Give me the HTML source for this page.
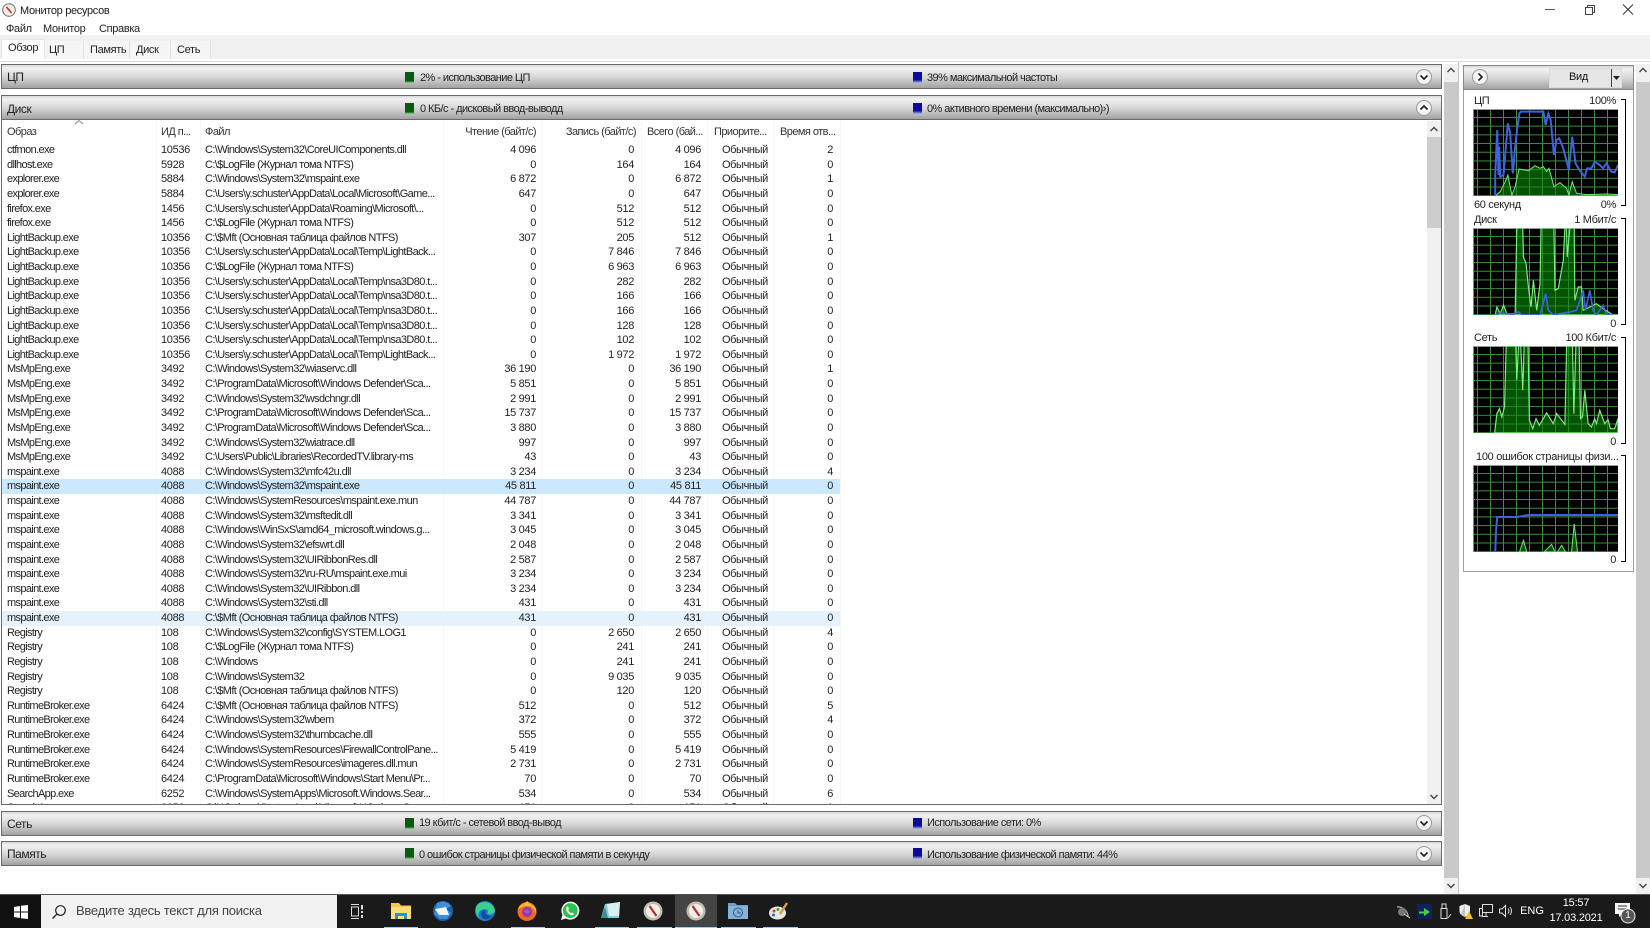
<!DOCTYPE html>
<html lang="ru"><head><meta charset="utf-8"><title>Монитор ресурсов</title>
<style>
*{box-sizing:border-box}
html,body{margin:0;padding:0;background:#fff;width:1650px;height:928px;overflow:hidden}
body{position:relative;font:11px/14px "Liberation Sans","Noto Sans CJK SC",sans-serif;color:#222;letter-spacing:-.33px}
.t{position:absolute;white-space:nowrap;line-height:14px}
.st{letter-spacing:-.56px}
.a{position:absolute}
.pn{position:absolute;left:1px;width:1441px;height:25px;border:1px solid #6a6a6a;background:linear-gradient(#d8d8d8,#f1f1f1 14%,#d4d4d4 55%,#a2a2a2)}
.cap{position:absolute;left:5px;font-size:12px;letter-spacing:-.45px;white-space:nowrap;color:#222;line-height:14px}
.g,.b{position:absolute;width:9px;height:11px}
.g{left:405px;background:linear-gradient(#0a5a12 0,#0a5a12 80%,#7ee27e 100%)}
.b{left:913px;background:linear-gradient(#0a0a9c 0,#0a0a9c 70%,#9cc4f0 100%)}
.circ{position:absolute;width:16px;height:16px;border-radius:50%;border:1px solid #9a9a9a;background:radial-gradient(#fff,#e8e8e8)}
#tbl{position:absolute;left:2px;top:143px;width:1425px;height:661px;overflow:hidden}
.r{position:relative;height:14.63px;margin:0;white-space:nowrap;width:838px}
.r span{position:absolute;top:0;line-height:14.6px}
.r span:nth-child(1){left:5px;letter-spacing:-.65px}
.r span:nth-child(2){left:159px}
.r span:nth-child(3){left:203px;letter-spacing:-.6px}
.r span:nth-child(4){left:444px;width:90px;text-align:right}
.r span:nth-child(5){left:539px;width:93px;text-align:right}
.r span:nth-child(6){left:639px;width:60px;text-align:right}
.r span:nth-child(7){left:720px;letter-spacing:-.4px}
.r span:nth-child(8){left:771px;width:60px;text-align:right}
.s1{background:#cce8ff}.s2{background:#e5f2fb}
.h{color:#333;top:125px;letter-spacing:-.55px}
.sep{position:absolute;top:121px;height:683px;width:1px;background:#f6f6f6}
.ch{position:absolute;width:145px;height:87px;background-color:#000;border-top:1px solid #9a9a9a;border-left:1px solid #8a8a8a;
background-image:linear-gradient(#3f8f3f 1px,transparent 1px),linear-gradient(90deg,#3f8f3f 1px,transparent 1px);background-size:13px 8.7px;background-position:3px 7px}
.ch svg{position:absolute;left:-1px;top:-1px;width:145px;height:87px;overflow:hidden}
.br{position:absolute;left:1621px;width:5px;border:1px solid #000;border-left:0}
.ul{position:absolute;top:926.5px;height:1.5px;background:#9ccbee}
.w{color:#fff;letter-spacing:0}
</style></head><body>

<svg class="a" style="left:2px;top:3px" width="14" height="14" viewBox="0 0 14 14"><circle cx="7" cy="7" r="6.3" fill="#f2eee8" stroke="#7a6a60"/><path d="M4.500 4L9.500 10" stroke="#b83030" stroke-width="1.600"/></svg>
<div class="t" style="left:20px;top:4px;color:#1a1a1a">Монитор ресурсов</div>
<div class="t" style="left:6px;top:22px">Файл</div>
<div class="t" style="left:43px;top:22px">Монитор</div>
<div class="t" style="left:99px;top:22px">Справка</div>

<svg class="a" style="left:1540px;top:2px" width="100" height="16" viewBox="0 0 100 16"><path d="M5 7.500H15" stroke="#555" stroke-width="1"/><path d="M45.500 5.500h7v7h-7zM47.500 5.500v-2h7v7h-2" fill="none" stroke="#444"/><path d="M83 2.500L93 12.500M93 2.500L83 12.500" stroke="#333" stroke-width="1"/></svg>

<div class="a" style="left:0;top:35px;width:1650px;height:24px;background:#f0f0f0"></div>
<div class="a" style="left:0;top:61px;width:1650px;height:1px;background:#dcdcdc"></div>
<div class="a" style="left:1px;top:39px;width:44px;height:20px;background:#fdfdfd;border:1px solid #e6e6e6;border-bottom:0"></div>
<div class="a" style="left:45px;top:41px;width:39px;height:18px;background:#f5f5f5;border-right:1px solid #e2e2e2"></div>
<div class="a" style="left:84px;top:41px;width:46px;height:18px;background:#f5f5f5;border-right:1px solid #e2e2e2"></div>
<div class="a" style="left:130px;top:41px;width:41px;height:18px;background:#f5f5f5;border-right:1px solid #e2e2e2"></div>
<div class="a" style="left:171px;top:41px;width:40px;height:18px;background:#f5f5f5;border-right:1px solid #e2e2e2"></div>
<div class="t" style="left:8px;top:41px">Обзор</div>
<div class="t" style="left:49px;top:43px">ЦП</div>
<div class="t" style="left:90px;top:43px">Память</div>
<div class="t" style="left:136px;top:43px">Диск</div>
<div class="t" style="left:177px;top:43px">Сеть</div>

<!-- Panels -->
<div class="pn" style="top:64px"><div class="cap" style="top:5px">ЦП</div></div>
<div class="g" style="top:72px"></div><div class="t st" style="left:420px;top:71px">2% - использование ЦП</div>
<div class="b" style="top:72px"></div><div class="t st" style="left:927px;top:71px">39% максимальной частоты</div>

<div class="pn" style="top:95px"><div class="cap" style="top:6px">Диск</div></div>
<div class="g" style="top:103px"></div><div class="t st" style="left:420px;top:102px">0 КБ/с - дисковый ввод-выводд</div>
<div class="b" style="top:103px"></div><div class="t st" style="left:927px;top:102px">0% активного времени (максимально)›)</div>

<div class="circ" style="left:1416px;top:69px"></div>
<svg class="a" style="left:1418px;top:71px" width="12" height="12"><path d="M2.500 4.500L6 8L9.500 4.500" fill="none" stroke="#222" stroke-width="1.700"/></svg>
<div class="circ" style="left:1416px;top:100px"></div>
<svg class="a" style="left:1418px;top:102px" width="12" height="12"><path d="M2.500 7.500L6 4L9.500 7.500" fill="none" stroke="#222" stroke-width="1.700"/></svg>

<div class="a" style="left:1px;top:120px;width:1px;height:684px;background:#6a6a6a"></div>
<div class="a" style="left:1441px;top:120px;width:1px;height:685px;background:#6a6a6a"></div>
<div class="a" style="left:1px;top:804px;width:1441px;height:1px;background:#6a6a6a"></div>

<div class="sep" style="left:156px"></div><div class="sep" style="left:200px"></div><div class="sep" style="left:443px"></div><div class="sep" style="left:541px"></div><div class="sep" style="left:641px"></div><div class="sep" style="left:707px"></div><div class="sep" style="left:773px"></div><div class="sep" style="left:840px"></div>

<svg class="a" style="left:74px;top:119px" width="10" height="6"><path d="M1 5L5 1.500L9 5" fill="none" stroke="#888"/></svg>
<div class="t h" style="left:7px">Образ</div>
<div class="t h" style="left:161px">ИД п...</div>
<div class="t h" style="left:205px">Файл</div>
<div class="t h" style="left:446px;width:90px;text-align:right">Чтение (байт/с)</div>
<div class="t h" style="left:536px;width:100px;text-align:right">Запись (байт/с)</div>
<div class="t h" style="left:647px">Всего (бай...</div>
<div class="t h" style="left:714px">Приорите...</div>
<div class="t h" style="left:780px">Время отв...</div>

<div id="tbl">
<p class="r"><span>ctfmon.exe</span><span>10536</span><span>C:\Windows\System32\CoreUIComponents.dll</span><span>4 096</span><span>0</span><span>4 096</span><span>Обычный</span><span>2</span></p>
<p class="r"><span>dllhost.exe</span><span>5928</span><span>C:\$LogFile (Журнал тома NTFS)</span><span>0</span><span>164</span><span>164</span><span>Обычный</span><span>0</span></p>
<p class="r"><span>explorer.exe</span><span>5884</span><span>C:\Windows\System32\mspaint.exe</span><span>6 872</span><span>0</span><span>6 872</span><span>Обычный</span><span>1</span></p>
<p class="r"><span>explorer.exe</span><span>5884</span><span>C:\Users\y.schuster\AppData\Local\Microsoft\Game...</span><span>647</span><span>0</span><span>647</span><span>Обычный</span><span>0</span></p>
<p class="r"><span>firefox.exe</span><span>1456</span><span>C:\Users\y.schuster\AppData\Roaming\Microsoft\...</span><span>0</span><span>512</span><span>512</span><span>Обычный</span><span>0</span></p>
<p class="r"><span>firefox.exe</span><span>1456</span><span>C:\$LogFile (Журнал тома NTFS)</span><span>0</span><span>512</span><span>512</span><span>Обычный</span><span>0</span></p>
<p class="r"><span>LightBackup.exe</span><span>10356</span><span>C:\$Mft (Основная таблица файлов NTFS)</span><span>307</span><span>205</span><span>512</span><span>Обычный</span><span>1</span></p>
<p class="r"><span>LightBackup.exe</span><span>10356</span><span>C:\Users\y.schuster\AppData\Local\Temp\LightBack...</span><span>0</span><span>7 846</span><span>7 846</span><span>Обычный</span><span>0</span></p>
<p class="r"><span>LightBackup.exe</span><span>10356</span><span>C:\$LogFile (Журнал тома NTFS)</span><span>0</span><span>6 963</span><span>6 963</span><span>Обычный</span><span>0</span></p>
<p class="r"><span>LightBackup.exe</span><span>10356</span><span>C:\Users\y.schuster\AppData\Local\Temp\nsa3D80.t...</span><span>0</span><span>282</span><span>282</span><span>Обычный</span><span>0</span></p>
<p class="r"><span>LightBackup.exe</span><span>10356</span><span>C:\Users\y.schuster\AppData\Local\Temp\nsa3D80.t...</span><span>0</span><span>166</span><span>166</span><span>Обычный</span><span>0</span></p>
<p class="r"><span>LightBackup.exe</span><span>10356</span><span>C:\Users\y.schuster\AppData\Local\Temp\nsa3D80.t...</span><span>0</span><span>166</span><span>166</span><span>Обычный</span><span>0</span></p>
<p class="r"><span>LightBackup.exe</span><span>10356</span><span>C:\Users\y.schuster\AppData\Local\Temp\nsa3D80.t...</span><span>0</span><span>128</span><span>128</span><span>Обычный</span><span>0</span></p>
<p class="r"><span>LightBackup.exe</span><span>10356</span><span>C:\Users\y.schuster\AppData\Local\Temp\nsa3D80.t...</span><span>0</span><span>102</span><span>102</span><span>Обычный</span><span>0</span></p>
<p class="r"><span>LightBackup.exe</span><span>10356</span><span>C:\Users\y.schuster\AppData\Local\Temp\LightBack...</span><span>0</span><span>1 972</span><span>1 972</span><span>Обычный</span><span>0</span></p>
<p class="r"><span>MsMpEng.exe</span><span>3492</span><span>C:\Windows\System32\wiaservc.dll</span><span>36 190</span><span>0</span><span>36 190</span><span>Обычный</span><span>1</span></p>
<p class="r"><span>MsMpEng.exe</span><span>3492</span><span>C:\ProgramData\Microsoft\Windows Defender\Sca...</span><span>5 851</span><span>0</span><span>5 851</span><span>Обычный</span><span>0</span></p>
<p class="r"><span>MsMpEng.exe</span><span>3492</span><span>C:\Windows\System32\wsdchngr.dll</span><span>2 991</span><span>0</span><span>2 991</span><span>Обычный</span><span>0</span></p>
<p class="r"><span>MsMpEng.exe</span><span>3492</span><span>C:\ProgramData\Microsoft\Windows Defender\Sca...</span><span>15 737</span><span>0</span><span>15 737</span><span>Обычный</span><span>0</span></p>
<p class="r"><span>MsMpEng.exe</span><span>3492</span><span>C:\ProgramData\Microsoft\Windows Defender\Sca...</span><span>3 880</span><span>0</span><span>3 880</span><span>Обычный</span><span>0</span></p>
<p class="r"><span>MsMpEng.exe</span><span>3492</span><span>C:\Windows\System32\wiatrace.dll</span><span>997</span><span>0</span><span>997</span><span>Обычный</span><span>0</span></p>
<p class="r"><span>MsMpEng.exe</span><span>3492</span><span>C:\Users\Public\Libraries\RecordedTV.library-ms</span><span>43</span><span>0</span><span>43</span><span>Обычный</span><span>0</span></p>
<p class="r"><span>mspaint.exe</span><span>4088</span><span>C:\Windows\System32\mfc42u.dll</span><span>3 234</span><span>0</span><span>3 234</span><span>Обычный</span><span>4</span></p>
<p class="r s1"><span>mspaint.exe</span><span>4088</span><span>C:\Windows\System32\mspaint.exe</span><span>45 811</span><span>0</span><span>45 811</span><span>Обычный</span><span>0</span></p>
<p class="r"><span>mspaint.exe</span><span>4088</span><span>C:\Windows\SystemResources\mspaint.exe.mun</span><span>44 787</span><span>0</span><span>44 787</span><span>Обычный</span><span>0</span></p>
<p class="r"><span>mspaint.exe</span><span>4088</span><span>C:\Windows\System32\msftedit.dll</span><span>3 341</span><span>0</span><span>3 341</span><span>Обычный</span><span>0</span></p>
<p class="r"><span>mspaint.exe</span><span>4088</span><span>C:\Windows\WinSxS\amd64_microsoft.windows.g...</span><span>3 045</span><span>0</span><span>3 045</span><span>Обычный</span><span>0</span></p>
<p class="r"><span>mspaint.exe</span><span>4088</span><span>C:\Windows\System32\efswrt.dll</span><span>2 048</span><span>0</span><span>2 048</span><span>Обычный</span><span>0</span></p>
<p class="r"><span>mspaint.exe</span><span>4088</span><span>C:\Windows\System32\UIRibbonRes.dll</span><span>2 587</span><span>0</span><span>2 587</span><span>Обычный</span><span>0</span></p>
<p class="r"><span>mspaint.exe</span><span>4088</span><span>C:\Windows\System32\ru-RU\mspaint.exe.mui</span><span>3 234</span><span>0</span><span>3 234</span><span>Обычный</span><span>0</span></p>
<p class="r"><span>mspaint.exe</span><span>4088</span><span>C:\Windows\System32\UIRibbon.dll</span><span>3 234</span><span>0</span><span>3 234</span><span>Обычный</span><span>0</span></p>
<p class="r"><span>mspaint.exe</span><span>4088</span><span>C:\Windows\System32\sti.dll</span><span>431</span><span>0</span><span>431</span><span>Обычный</span><span>0</span></p>
<p class="r s2"><span>mspaint.exe</span><span>4088</span><span>C:\$Mft (Основная таблица файлов NTFS)</span><span>431</span><span>0</span><span>431</span><span>Обычный</span><span>0</span></p>
<p class="r"><span>Registry</span><span>108</span><span>C:\Windows\System32\config\SYSTEM.LOG1</span><span>0</span><span>2 650</span><span>2 650</span><span>Обычный</span><span>4</span></p>
<p class="r"><span>Registry</span><span>108</span><span>C:\$LogFile (Журнал тома NTFS)</span><span>0</span><span>241</span><span>241</span><span>Обычный</span><span>0</span></p>
<p class="r"><span>Registry</span><span>108</span><span>C:\Windows</span><span>0</span><span>241</span><span>241</span><span>Обычный</span><span>0</span></p>
<p class="r"><span>Registry</span><span>108</span><span>C:\Windows\System32</span><span>0</span><span>9 035</span><span>9 035</span><span>Обычный</span><span>0</span></p>
<p class="r"><span>Registry</span><span>108</span><span>C:\$Mft (Основная таблица файлов NTFS)</span><span>0</span><span>120</span><span>120</span><span>Обычный</span><span>0</span></p>
<p class="r"><span>RuntimeBroker.exe</span><span>6424</span><span>C:\$Mft (Основная таблица файлов NTFS)</span><span>512</span><span>0</span><span>512</span><span>Обычный</span><span>5</span></p>
<p class="r"><span>RuntimeBroker.exe</span><span>6424</span><span>C:\Windows\System32\wbem</span><span>372</span><span>0</span><span>372</span><span>Обычный</span><span>4</span></p>
<p class="r"><span>RuntimeBroker.exe</span><span>6424</span><span>C:\Windows\System32\thumbcache.dll</span><span>555</span><span>0</span><span>555</span><span>Обычный</span><span>0</span></p>
<p class="r"><span>RuntimeBroker.exe</span><span>6424</span><span>C:\Windows\SystemResources\FirewallControlPane...</span><span>5 419</span><span>0</span><span>5 419</span><span>Обычный</span><span>0</span></p>
<p class="r"><span>RuntimeBroker.exe</span><span>6424</span><span>C:\Windows\SystemResources\imageres.dll.mun</span><span>2 731</span><span>0</span><span>2 731</span><span>Обычный</span><span>0</span></p>
<p class="r"><span>RuntimeBroker.exe</span><span>6424</span><span>C:\ProgramData\Microsoft\Windows\Start Menu\Pr...</span><span>70</span><span>0</span><span>70</span><span>Обычный</span><span>0</span></p>
<p class="r"><span>SearchApp.exe</span><span>6252</span><span>C:\Windows\SystemApps\Microsoft.Windows.Sear...</span><span>534</span><span>0</span><span>534</span><span>Обычный</span><span>6</span></p>
<p class="r"><span>SearchApp.exe</span><span>6252</span><span>C:\Windows\SystemApps\Microsoft.Windows.Sear...</span><span>151</span><span>0</span><span>151</span><span>Обычный</span><span>1</span></p>
</div>

<!-- table scrollbar -->
<div class="a" style="left:1427px;top:121px;width:14px;height:683px;background:#f0f0f0"></div>
<div class="a" style="left:1427px;top:137px;width:14px;height:91px;background:#cdcdcd"></div>
<svg class="a" style="left:1429px;top:125px" width="10" height="8"><path d="M1.500 6L5 2.500L8.500 6" fill="none" stroke="#444" stroke-width="1.400"/></svg>
<svg class="a" style="left:1429px;top:793px" width="10" height="8"><path d="M1.500 2L5 5.500L8.500 2" fill="none" stroke="#444" stroke-width="1.400"/></svg>

<div class="pn" style="top:811px"><div class="cap" style="top:5px">Сеть</div></div>
<div class="g" style="top:818px"></div><div class="t st" style="left:419px;top:816px">19 кбит/с - сетевой ввод-вывод</div>
<div class="b" style="top:818px"></div><div class="t st" style="left:927px;top:816px">Использование сети: 0%</div>
<div class="pn" style="top:841px"><div class="cap" style="top:5px">Память</div></div>
<div class="g" style="top:848px"></div><div class="t st" style="left:419px;top:848px">0 ошибок страницы физической памяти в секунду</div>
<div class="b" style="top:848px"></div><div class="t st" style="left:927px;top:848px">Использование физической памяти: 44%</div>
<div class="circ" style="left:1416px;top:815px"></div>
<svg class="a" style="left:1418px;top:817px" width="12" height="12"><path d="M2.500 4.500L6 8L9.500 4.500" fill="none" stroke="#222" stroke-width="1.700"/></svg>
<div class="circ" style="left:1416px;top:846px"></div>
<svg class="a" style="left:1418px;top:848px" width="12" height="12"><path d="M2.500 4.500L6 8L9.500 4.500" fill="none" stroke="#222" stroke-width="1.700"/></svg>

<!-- outer scrollbars -->
<div class="a" style="left:1444px;top:64px;width:14px;height:830px;background:#f0f0f0"></div>
<div class="a" style="left:1444px;top:82px;width:14px;height:796px;background:#c9c9c9"></div>
<svg class="a" style="left:1446px;top:66px" width="10" height="8"><path d="M1.500 6L5 2.500L8.500 6" fill="none" stroke="#444" stroke-width="1.400"/></svg>
<svg class="a" style="left:1446px;top:882px" width="10" height="8"><path d="M1.500 2L5 5.500L8.500 2" fill="none" stroke="#444" stroke-width="1.400"/></svg>
<div class="a" style="left:1458px;top:62px;width:1px;height:832px;background:#c4c4c4"></div>
<div class="a" style="left:1636px;top:64px;width:14px;height:830px;background:#f0f0f0"></div>
<div class="a" style="left:1636px;top:82px;width:14px;height:796px;background:#c9c9c9"></div>
<svg class="a" style="left:1638px;top:66px" width="10" height="8"><path d="M1.500 6L5 2.500L8.500 6" fill="none" stroke="#444" stroke-width="1.400"/></svg>
<svg class="a" style="left:1638px;top:882px" width="10" height="8"><path d="M1.500 2L5 5.500L8.500 2" fill="none" stroke="#444" stroke-width="1.400"/></svg>

<!-- sidebar -->
<div class="a" style="left:1463px;top:65px;width:171px;height:507px;border:1px solid #a0a0a0;background:#fff"></div>
<div class="a" style="left:1463px;top:65px;width:171px;height:25px;border:1px solid #8a8a8a;background:linear-gradient(#d8d8d8,#f1f1f1 14%,#d4d4d4 55%,#a2a2a2)"></div>
<div class="circ" style="left:1472px;top:69px"></div>
<svg class="a" style="left:1474px;top:71px" width="12" height="12"><path d="M4.500 2.500L8 6L4.500 9.500" fill="none" stroke="#222" stroke-width="1.700"/></svg>
<div class="a" style="left:1549px;top:68px;width:73px;height:20px;background:#e6e6e6;border:1px solid #dcdcdc"></div>
<div class="t" style="left:1569px;top:70px;color:#111">Вид</div>
<div class="a" style="left:1611px;top:69px;width:1px;height:18px;background:#444"></div>
<svg class="a" style="left:1612px;top:75px" width="9" height="6"><path d="M1 1H8L4.500 5z" fill="#222"/></svg>

<div class="t" style="left:1474px;top:94px">ЦП</div>
<div class="t" style="left:1556px;top:94px;width:60px;text-align:right">100%</div>
<div class="t" style="left:1474px;top:198px">60 секунд</div>
<div class="t" style="left:1556px;top:198px;width:60px;text-align:right">0%</div>
<div class="br" style="top:99px;height:107px"></div>
<div class="t" style="left:1474px;top:213px">Диск</div>
<div class="t" style="left:1536px;top:213px;width:80px;text-align:right">1 Мбит/с</div>
<div class="t" style="left:1556px;top:317px;width:60px;text-align:right">0</div>
<div class="br" style="top:218px;height:107px"></div>
<div class="t" style="left:1474px;top:331px">Сеть</div>
<div class="t" style="left:1516px;top:331px;width:100px;text-align:right">100 Кбит/с</div>
<div class="t" style="left:1556px;top:435px;width:60px;text-align:right">0</div>
<div class="br" style="top:337px;height:107px"></div>
<div class="t" style="left:1476px;top:450px;letter-spacing:-.3px">100 ошибок страницы физи...</div>
<div class="t" style="left:1556px;top:553px;width:60px;text-align:right">0</div>
<div class="br" style="top:455px;height:107px"></div>

<div class="ch" style="left:1473px;top:109px"><svg viewBox="218 327 437 261" preserveAspectRatio="none">
<polygon points="285,588 300,575 315,545 323,525 335,585 345,560 357,507 385,512 405,497 420,505 430,500 440,515 447,505 462,560 480,548 500,565 507,585 517,545 530,580 560,584 620,582 655,584 655,588" fill="#0a8a0a" fill-opacity=".6" stroke="#70e870" stroke-width="3"/>
<polyline points="285,588 285,525 291,390 295,525 297,440 300,530 310,525 323,370 330,400 338,520 345,440 352,380 358,340 362,335 430,335 437,375 445,340 452,360 462,465 470,420 478,415 490,445 507,510 517,410 527,490 540,512 555,530 562,505 575,505 585,485 600,495 610,505 620,490 635,515 645,517 655,495" fill="none" stroke="#3f62e0" stroke-width="6"/>
</svg></div>

<div class="ch" style="left:1473px;top:228px"><svg viewBox="218 683 437 261" preserveAspectRatio="none">
<polygon points="285,944 290,920 300,940 310,915 320,940 345,940 350,683 368,683 370,770 378,790 385,860 393,920 400,840 410,930 420,850 423,683 462,683 465,870 475,865 490,780 495,683 500,683 502,770 510,683 523,683 525,900 535,860 545,860 550,930 570,920 590,910 610,925 640,944 655,944" fill="#0a8a0a" fill-opacity=".6" stroke="#7cf07c" stroke-width="3.500"/>
<polyline points="285,944 300,938 340,942 355,935 365,944 420,944 437,880 445,930 460,944 510,935 530,930 540,900 550,870 557,930 570,870 580,930 590,944 610,915 620,944 640,944" fill="none" stroke="#3f62e0" stroke-width="5"/>
</svg></div>

<div class="ch" style="left:1473px;top:346px"><svg viewBox="218 78 437 260" preserveAspectRatio="none">
<polygon points="283,338 290,280 298,265 305,290 313,260 318,78 347,78 350,180 355,78 362,78 368,210 372,78 384,78 388,300 398,325 408,295 418,315 440,278 460,310 470,280 495,312 500,78 518,78 522,280 528,78 538,78 542,295 548,290 555,210 565,310 575,320 585,295 590,310 600,270 615,310 625,298 632,325 645,325 655,295 655,338" fill="#0a8a0a" fill-opacity=".6" stroke="#7cf07c" stroke-width="3.500"/>
</svg></div>

<div class="ch" style="left:1473px;top:465px"><svg viewBox="218 434 437 261" preserveAspectRatio="none">
<polygon points="358,695 370,660 380,695" fill="#0a8a0a" fill-opacity=".6" stroke="#70e870" stroke-width="3"/>
<polygon points="432,695 455,672 465,695" fill="#0a8a0a" fill-opacity=".6" stroke="#70e870" stroke-width="3"/>
<polygon points="472,695 485,675 497,695" fill="#0a8a0a" fill-opacity=".6" stroke="#70e870" stroke-width="3"/>
<polygon points="515,695 523,610 533,695" fill="#0a8a0a" fill-opacity=".6" stroke="#70e870" stroke-width="3"/>
<polyline points="285,695 287,640 291,590 350,590 385,584 655,584" fill="none" stroke="#3f62e0" stroke-width="6"/>
</svg></div>

<!-- taskbar -->
<div class="a" style="left:0;top:894px;width:1650px;height:34px;background:#1a1a1a;border-top:1px solid #555"></div>
<div class="a" style="left:0;top:895px;width:41px;height:33px;background:#111"></div>
<svg class="a" style="left:14px;top:905px" width="14" height="14"><path d="M0 2L6 1V6.500H0zM7 .8L14 0V6.500H7zM0 7.500H6V13L0 12zM7 7.500H14V14L7 13.200z" fill="#fff"/></svg>
<div class="a" style="left:41px;top:895px;width:296px;height:33px;background:#f2f2f2"></div>
<svg class="a" style="left:51px;top:904px" width="16" height="16"><circle cx="9.500" cy="6.500" r="4.800" fill="none" stroke="#222" stroke-width="1.200"/><path d="M6 10L1.500 14.500" stroke="#222" stroke-width="1.300"/></svg>
<div class="t" style="left:76px;top:904px;font-size:13px;letter-spacing:-.25px;color:#444">Введите здесь текст для поиска</div>

<svg class="a" style="left:350px;top:904px" width="15" height="15"><path d="M1 .5H9M1 14.500H9" stroke="#ddd"/><rect x="1.500" y="3" width="7" height="9" fill="none" stroke="#ddd"/><path d="M12 1V5.500M12 7V9M12 11V14" stroke="#ddd" stroke-width="2"/></svg>

<div class="a" style="left:675px;top:895px;width:42px;height:33px;background:#444"></div>
<div class="ul" style="left:384px;width:34px"></div><div class="ul" style="left:511px;width:34px"></div><div class="ul" style="left:595px;width:34px"></div><div class="ul" style="left:637px;width:35px"></div><div class="ul" style="left:675px;width:42px"></div><div class="ul" style="left:721px;width:35px"></div><div class="ul" style="left:763px;width:35px"></div>

<svg class="a" style="left:391px;top:902px" width="20" height="18"><path d="M0 1H8L10 3.500H20V17H0z" fill="#f2c94c"/><rect x="0" y="5" width="20" height="12" fill="#fbdc7a"/><path d="M4 17V11H16V17H13V14H7V17z" fill="#2f8fd0"/></svg>
<svg class="a" style="left:433px;top:901px" width="20" height="20"><circle cx="10" cy="10" r="10" fill="#1f5fa8"/><path d="M4 2C8 0 14 0 18 5L13 8 18 12 14 18H7L1 13z" fill="#3a8ee0"/><path d="M2 8L13 6 16 14H6z" fill="#f0f4f8"/></svg>
<svg class="a" style="left:475px;top:901px" width="20" height="20"><circle cx="10" cy="10" r="10" fill="#1a7fd4"/><path d="M2 4C7 -1 17 0 20 9 20 12 16 14 12 13 14 11 13 8 10 8 5 8 2 12 4 17 0 13 0 8 2 4z" fill="#3bd08b"/><path d="M6 13C6 10 9 9 11 10 9 12 12 15 17 15 14 20 6 19 6 13z" fill="#0f4f9e"/></svg>
<svg class="a" style="left:517px;top:900px" width="20" height="21"><circle cx="10" cy="11.500" r="9.500" fill="#f2681e"/><path d="M1 9C3 4 8 4 10 1 12 2 11 4 14 4 18 6 20 10 19 14 18 9 14 6 10 6 6 6 4 8 1 9z" fill="#ffb52c"/><circle cx="10" cy="12" r="5" fill="#7a3ec8"/><path d="M6 11L11 9 13 12 10 14z" fill="#e0457a"/></svg>
<svg class="a" style="left:560px;top:901px" width="20" height="20"><path d="M1 19L2.500 14A9 9 0 1 1 6 17.500z" fill="#fff"/><circle cx="10.200" cy="9.600" r="7.500" fill="#2cc04f"/><path d="M7 5.500C5.500 7 6 10 8 12S12 14.800 14 13.500L12.500 11.500 11 12C9.500 11.500 8.500 10 8.200 9L9 8 8 5.500z" fill="#fff"/></svg>
<svg class="a" style="left:601px;top:901px" width="20" height="20"><path d="M4 3L19 1 18 17H0z" fill="#7fd0d8"/><path d="M6 3L19 1 18 15 8 15z" fill="#d8f0f2"/><path d="M0 17L4 6 7 17z" fill="#3a8ea0"/></svg>
<svg class="a" style="left:643px;top:901px" width="20" height="20"><circle cx="10" cy="10" r="9.500" fill="#c4bcb2"/><circle cx="10" cy="10" r="7" fill="#f2eee8"/><path d="M6.500 5L13.500 15" stroke="#b03030" stroke-width="2.200"/></svg>
<svg class="a" style="left:686px;top:901px" width="20" height="20"><circle cx="10" cy="10" r="9.500" fill="#c4bcb2"/><circle cx="10" cy="10" r="7" fill="#f2eee8"/><path d="M6.500 5L13.500 15" stroke="#b03030" stroke-width="2.200"/></svg>
<svg class="a" style="left:728px;top:902px" width="20" height="18"><path d="M0 1H7L9 3H20V17H0z" fill="#6a9cc8"/><rect y="4" width="20" height="13" fill="#86b2d8"/><circle cx="10" cy="10.500" r="4.500" fill="none" stroke="#2f5f8a"/><path d="M10 8V11H13" stroke="#2f5f8a" fill="none"/></svg>
<svg class="a" style="left:769px;top:901px" width="20" height="20"><ellipse cx="8.500" cy="12" rx="8.500" ry="6.500" fill="#e8e8e0"/><circle cx="5" cy="10" r="1.500" fill="#d84040"/><circle cx="9" cy="8.500" r="1.500" fill="#40a040"/><circle cx="4.500" cy="14" r="1.500" fill="#4060d0"/><path d="M11 13L18 2" stroke="#c8a050" stroke-width="2.500"/></svg>

<svg class="a" style="left:1396px;top:904px" width="15" height="15"><path d="M1 3A10 10 0 0 1 12 13" fill="none" stroke="#999" stroke-width="1.500"/><circle cx="6" cy="8" r="4" fill="#777"/><path d="M8 10L14 14" stroke="#ddd"/></svg>
<svg class="a" style="left:1417px;top:904px" width="15" height="15"><rect width="15" height="15" fill="#102060"/><path d="M2 7.500H7V4L13 8 7 12V9.500H2z" fill="#42d040"/></svg>
<svg class="a" style="left:1439px;top:903px" width="13" height="17"><path d="M2 5.500H8V15.500H2zM3 1H7V5.500H3z" fill="none" stroke="#ddd"/><path d="M9 15L12 11" stroke="#ccc"/></svg>
<svg class="a" style="left:1459px;top:903px" width="14" height="17"><path d="M.5 3L6 1 11 3V8C11 11 8 13 6 14 3 13 .5 11 .5 8z" fill="#eee"/><path d="M6 1V14H1z" fill="#1a1a1a" opacity=".2"/><path d="M10 8L14 16H6z" fill="#f2c020"/></svg>
<svg class="a" style="left:1479px;top:904px" width="14" height="14"><path d="M3.500 .5H13.500V8.500H3.500zM.5 4.500H3.500V12H.5zM3 12.500H9M7 8.500V12.500" fill="none" stroke="#ddd"/></svg>
<svg class="a" style="left:1499px;top:904px" width="15" height="14"><path d="M.5 5H3L6.500 1.500V12.500L3 9H.5z" fill="none" stroke="#ddd"/><path d="M9 4.500Q11 7 9 9.500M11 3Q14 7 11 11" fill="none" stroke="#ddd"/></svg>
<div class="t w" style="left:1517px;top:904px;font-size:11px;width:30px;text-align:center">ENG</div>
<div class="t w" style="left:1546px;top:896px;width:60px;text-align:center;font-size:11px;letter-spacing:-.2px">15:57</div>
<div class="t w" style="left:1546px;top:911px;width:60px;text-align:center;font-size:11px;letter-spacing:-.2px">17.03.2021</div>
<svg class="a" style="left:1614px;top:902px" width="26" height="24"><path d="M1 1H16V12H8L5 15V12H1z" fill="#f4f4f4"/><path d="M4 4H13M4 7H13" stroke="#333"/><circle cx="14" cy="14" r="7" fill="#555" stroke="#eee"/></svg>
<div class="t w" style="left:1624px;top:909px;width:8px;text-align:center;font-size:10px">1</div>
</body></html>
